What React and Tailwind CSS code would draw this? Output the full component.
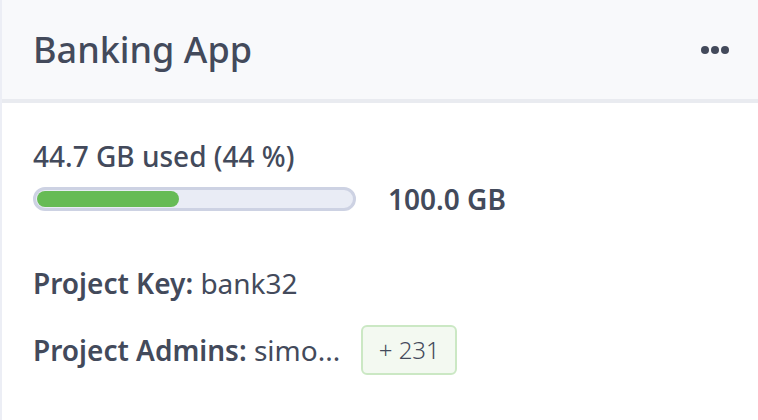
import React from "react";

export default function App() {
  return (
    <div
      className="w-[758px] h-[420px] bg-white border-l-2 border-[#eceef5] text-[#434a5b] overflow-hidden"
      style={{ fontFamily: '"Noto Sans", "Open Sans", sans-serif' }}
    >
      <div className="h-[103px] bg-[#f8f9fb] border-b-4 border-[#e9ebf0] flex items-center justify-between pl-[31px] pr-[29px]">
        <div className="text-[36px] font-medium leading-none">Banking App</div>
        <div className="flex gap-[2px] items-center">
          <span className="w-[8px] h-[8px] rounded-full bg-[#434a5b]"></span>
          <span className="w-[8px] h-[8px] rounded-full bg-[#434a5b]"></span>
          <span className="w-[8px] h-[8px] rounded-full bg-[#434a5b]"></span>
        </div>
      </div>
      <div className="pl-[31px] pt-[39px]">
        <div className="text-[28px] leading-[28px] font-medium">44.7 GB used (44 %)</div>
        <div className="flex items-center mt-[15px]">
          <div className="w-[323px] h-[24px] rounded-full border-[3px] border-[#cdd2e3] bg-[#e9ecf5] p-[1px]">
            <div className="h-full w-[45%] rounded-full bg-[#66bb55]"></div>
          </div>
          <div className="ml-[32px] text-[28px] leading-[28px] font-semibold">100.0 GB</div>
        </div>
        <div className="mt-[56px] text-[28px] leading-[28px]">
          <span className="font-semibold">Project Key:</span> bank32
        </div>
        <div className="mt-[28px] flex items-center text-[28px] leading-[28px]">
          <div>
            <span className="font-semibold">Project Admins:</span> simo...
          </div>
          <div className="ml-[21px] w-[96px] h-[50px] flex items-center justify-center rounded-[6px] border-2 border-[#cbe8c4] bg-[#f3f9f1] text-[24px] font-light text-[#434a5b]">
            + 231
          </div>
        </div>
      </div>
    </div>
  );
}
